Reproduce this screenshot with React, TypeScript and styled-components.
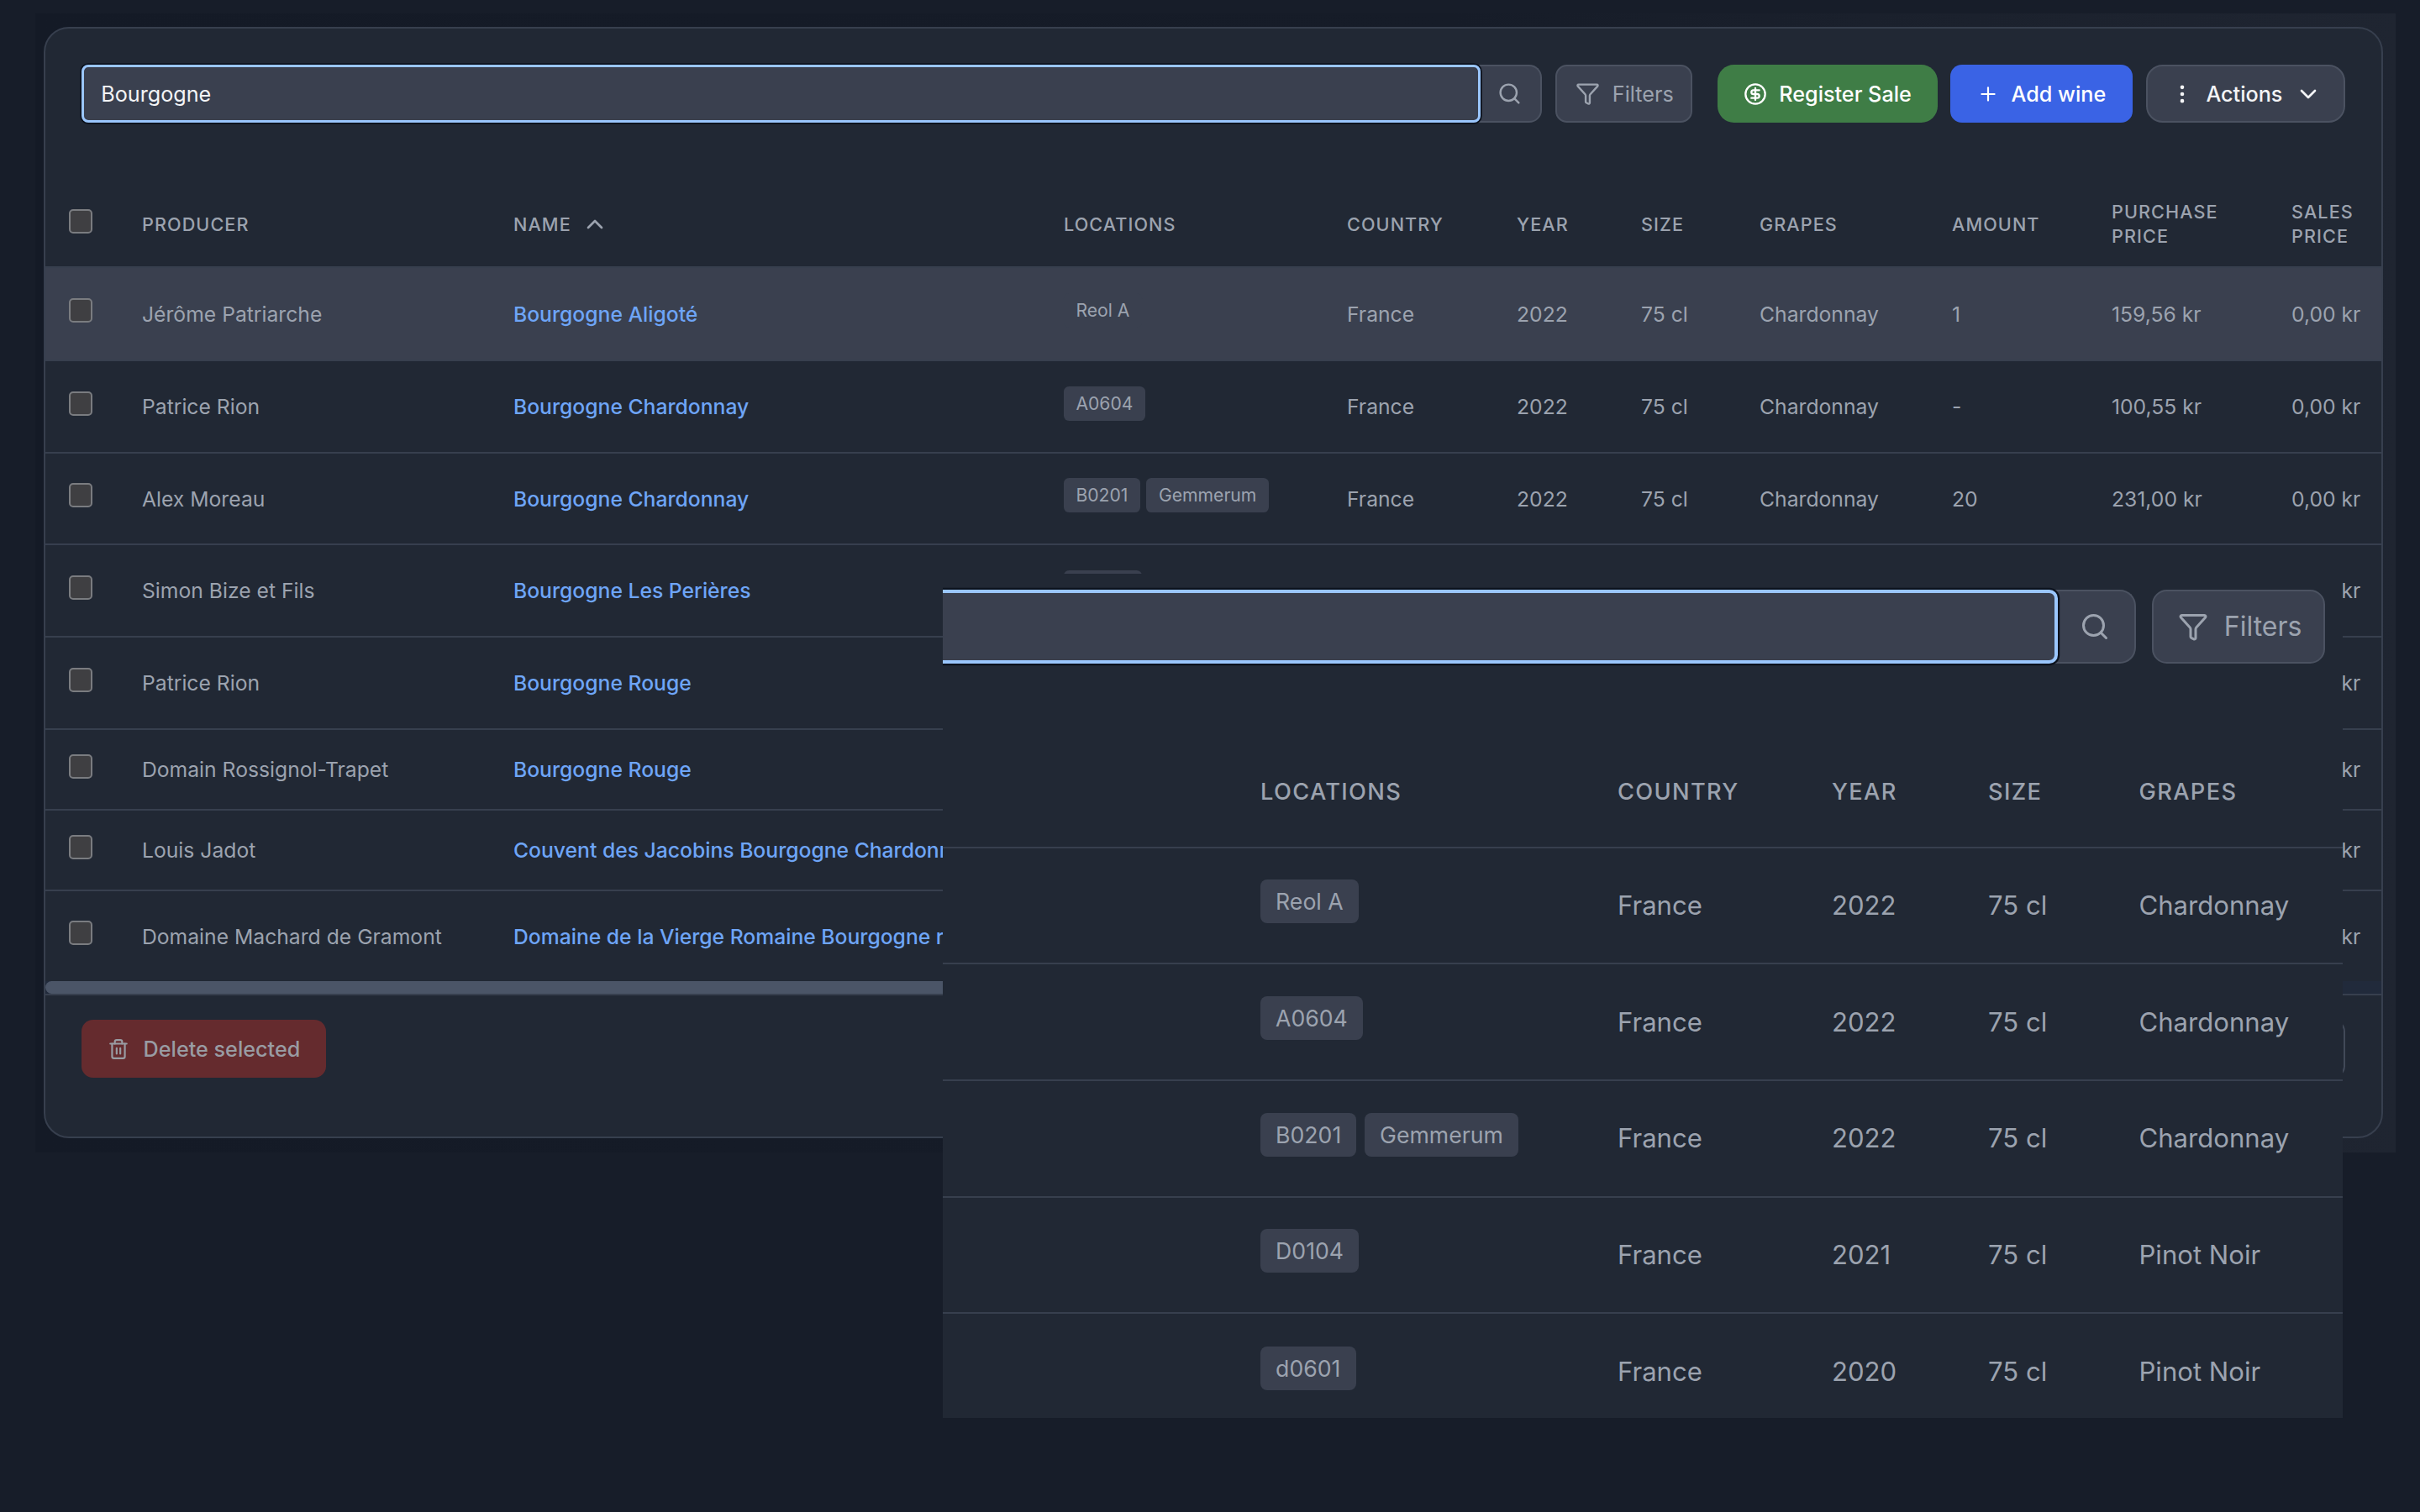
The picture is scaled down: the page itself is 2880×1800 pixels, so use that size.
import React from "react";
import styled, { createGlobalStyle } from "styled-components";
import {
  ChevronDown,
  ChevronUp,
  CircleDollarSign,
  EllipsisVertical,
  Funnel,
  Plus,
  Search,
  Trash2,
} from "lucide-react";

const GlobalStyle = createGlobalStyle`
  html, body { margin: 0; padding: 0; background: #171d29; }
  body { font-family: Inter, "Noto Sans", sans-serif; -webkit-font-smoothing: antialiased; }
  * { box-sizing: border-box; }
`;

const Stage = styled.div`
  position: relative;
  width: 2880px;
  height: 1800px;
  padding: 16px 0 0 42px;
  overflow: hidden;
  background: #171d29;
`;

const Frame = styled.div`
  width: 2809px;
  height: 1356px;
  padding: 16px 15px 17px 10px;
  background: linear-gradient(90deg, #141a26 0%, #161c28 60%, #1f2531 100%);
`;

const Panel = styled.section`
  height: 1323px;
  display: flex;
  flex-direction: column;
  background: #212834;
  border: 2px solid #373f4e;
  border-radius: 30px;
  overflow: hidden;
`;

const Toolbar = styled.div`
  display: flex;
  align-items: center;
  gap: 30px;
  padding: 43px 43px 0 43px;
  font-size: 25.2px;
`;

const ToolGroup = styled.div<{ $grow?: boolean }>`
  display: flex;
  align-items: center;
  gap: 0.6em;
  flex: ${(p) => (p.$grow ? "1" : "none")};
  min-width: 0;
`;

const SearchGroup = styled.div`
  flex: 1;
  display: flex;
  min-width: 0;
`;

const SearchInput = styled.input`
  flex: 1;
  min-width: 0;
  height: 2.74em;
  padding: 0 0.7em 0 0.8em;
  font: 400 1em Inter, sans-serif;
  color: #f3f4f6;
  background: #3a404f;
  border: 0.14em solid #9ac6fd;
  border-radius: 0.32em;
  box-shadow: 0 0 0 0.07em #0c121d;
  outline: none;
  position: relative;
  z-index: 1;
`;

const SearchButton = styled.button`
  flex: none;
  width: 3.05em;
  height: 2.74em;
  margin-left: -0.12em;
  padding: 0 0 0 0.06em;
  font-size: inherit;
  display: flex;
  align-items: center;
  justify-content: center;
  color: #9ca3af;
  background: #3a404f;
  border: 2px solid #4b5261;
  border-left: 0;
  border-radius: 0 0.6em 0.6em 0;
`;

const Button = styled.button<{ $tone: "ghost" | "green" | "blue" | "dark" | "danger" | "outline" }>`
  height: 2.74em;
  display: inline-flex;
  align-items: center;
  flex: none;
  gap: 0.58em;
  padding: 0 1.2em;
  font: 500 1em Inter, sans-serif;
  white-space: nowrap;
  border-radius: 0.55em;
  border: 2px solid transparent;
  ${(p) =>
    p.$tone === "ghost" &&
    `background:#3a404f;border-color:#4b5261;color:#9ca3af;font-weight:400;padding:0 0.8em 0 0.9em;`}
  ${(p) => p.$tone === "green" && `background:#3f7d46;color:#fff;border-radius:0.78em;padding:0 1.14em;`}
  ${(p) => p.$tone === "blue" && `background:#3a63e5;color:#fff;`}
  ${(p) =>
    p.$tone === "dark" &&
    `background:#3a404f;border-color:#4b5261;color:#f3f4f6;border-radius:0.78em;padding:0 1.05em 0 1.1em;gap:0.56em;`}
  ${(p) => p.$tone === "danger" && `background:#652b2e;color:#999ca3;padding:0 1.15em 0 1.15em;gap:0.66em;`}
  ${(p) => p.$tone === "outline" && `background:transparent;border-color:#414958;color:#9ca3af;`}
`;

const TableBlock = styled.div<{ $top: number }>`
  margin-top: ${(p) => p.$top}px;
`;

const Table = styled.table<{ $size: number }>`
  width: 100%;
  table-layout: fixed;
  border-collapse: collapse;
  font-size: ${(p) => p.$size}px;
  color: #9ca3af;
`;

const Col = styled.col<{ $w: number }>`
  width: ${(p) => p.$w}px;
`;

const Row = styled.tr<{ $h: number; $active?: boolean; $last?: boolean }>`
  height: ${(p) => p.$h}px;
  background: ${(p) => (p.$active ? "#3a404f" : "transparent")};
  border-bottom: ${(p) => (p.$last ? "0" : "2px solid #373f4e")};
`;

const Th = styled.th`
  padding: 0;
  font-size: 0.875em;
  line-height: 1.34;
  font-weight: 500;
  letter-spacing: 0.05em;
  text-align: left;
  text-transform: uppercase;
  color: #9ca3af;
  vertical-align: middle;
`;

const SortLabel = styled.span`
  display: inline-flex;
  align-items: center;
  gap: 12px;
`;

const Td = styled.td`
  padding: 0;
  white-space: nowrap;
  vertical-align: middle;
`;

const NameLink = styled.a`
  font-weight: 500;
  color: #6ea5f7;
  text-decoration: none;
`;

const BoxCell = styled.div`
  padding-left: 28px;
  padding-bottom: 8px;
`;

const Checkbox = styled.input.attrs({ type: "checkbox" })`
  appearance: none;
  display: block;
  width: 28px;
  height: 29px;
  margin: 0;
  background: #3f3f42;
  border: 2px solid #7a7c80;
  border-radius: 5px;
`;

const Tags = styled.div`
  display: flex;
  gap: 0.31em;
  padding-bottom: 0.3em;
`;

const Tag = styled.span`
  display: inline-flex;
  align-items: center;
  height: 1.95em;
  padding: 0 0.68em;
  font-size: 0.857em;
  color: #9ca3af;
  background: #3a404f;
  border-radius: 0.3em;
`;

const ScrollTrack = styled.div`
  height: 15px;
  background: #212a3b;
  border-bottom: 2px solid #373f4e;
  box-sizing: content-box;
`;

const ScrollThumb = styled.div`
  width: 2600px;
  height: 15px;
  background: #4b5567;
  border-radius: 8px;
`;

const Footer = styled.footer`
  display: flex;
  justify-content: space-between;
  padding: 29px 43px 0 43px;
  font-size: 25.2px;
`;

const Inset = styled.aside`
  position: absolute;
  left: 1122px;
  top: 683px;
  width: 1666px;
  height: 1005px;
  overflow: hidden;
  background: #212834;
`;

const InsetBar = styled.div`
  display: flex;
  align-items: center;
  gap: 0.6em;
  margin-left: -60px;
  padding: 19px 21px 0 0;
  font-size: 32px;
`;

type Wine = {
  producer: string;
  name: string;
  tags: string[];
  year: string;
  grapes: string;
  amount: string;
  buy: string;
  h: number;
};

const wines: Wine[] = [
  { producer: "Jérôme Patriarche", name: "Bourgogne Aligoté", tags: ["Reol A"], year: "2022", grapes: "Chardonnay", amount: "1", buy: "159,56 kr", h: 111 },
  { producer: "Patrice Rion", name: "Bourgogne Chardonnay", tags: ["A0604"], year: "2022", grapes: "Chardonnay", amount: "-", buy: "100,55 kr", h: 110 },
  { producer: "Alex Moreau", name: "Bourgogne Chardonnay", tags: ["B0201", "Gemmerum"], year: "2022", grapes: "Chardonnay", amount: "20", buy: "231,00 kr", h: 109 },
  { producer: "Simon Bize et Fils", name: "Bourgogne Les Perières", tags: ["D0104"], year: "2021", grapes: "Pinot Noir", amount: "6", buy: "245,00 kr", h: 110 },
  { producer: "Patrice Rion", name: "Bourgogne Rouge", tags: ["d0601"], year: "2020", grapes: "Pinot Noir", amount: "3", buy: "180,00 kr", h: 110 },
  { producer: "Domain Rossignol-Trapet", name: "Bourgogne Rouge", tags: [], year: "2021", grapes: "Pinot Noir", amount: "-", buy: "150,00 kr", h: 96 },
  { producer: "Louis Jadot", name: "Couvent des Jacobins Bourgogne Chardonnay", tags: [], year: "2021", grapes: "Chardonnay", amount: "-", buy: "120,00 kr", h: 96 },
  { producer: "Domaine Machard de Gramont", name: "Domaine de la Vierge Romaine Bourgogne rouge", tags: [], year: "2020", grapes: "Pinot Noir", amount: "-", buy: "140,00 kr", h: 108 },
];

const mainCols = [115, 442, 655, 337, 202, 148, 141, 229, 190, 214, 107];
const insetCols = [378, 425, 255, 186, 179.5, 242.5];
const insetWines = wines.slice(0, 5);

export default function App() {
  return (
    <Stage>
      <GlobalStyle />
      <Frame>
        <Panel>
          <Toolbar>
            <ToolGroup $grow>
              <SearchGroup>
                <SearchInput defaultValue="Bourgogne" aria-label="Search" />
                <SearchButton aria-label="Search">
                  <Search size={29} />
                </SearchButton>
              </SearchGroup>
              <Button $tone="ghost">
                <Funnel size={29} />
                Filters
              </Button>
            </ToolGroup>
            <ToolGroup>
              <Button $tone="green">
                <CircleDollarSign size={28} />
                Register Sale
              </Button>
              <Button $tone="blue">
                <Plus size={26} />
                Add wine
              </Button>
              <Button $tone="dark">
                <EllipsisVertical size={28} />
                Actions
                <ChevronDown size={32} />
              </Button>
            </ToolGroup>
          </Toolbar>

          <TableBlock $top={71}>
            <Table $size={24.7}>
              <colgroup>
                {mainCols.map((w, i) => (
                  <Col key={i} $w={w} />
                ))}
              </colgroup>
              <thead>
                <Row $h={101}>
                  <Th>
                    <BoxCell>
                      <Checkbox aria-label="Select all" />
                    </BoxCell>
                  </Th>
                  <Th>Producer</Th>
                  <Th>
                    <SortLabel>
                      Name
                      <ChevronUp size={32} />
                    </SortLabel>
                  </Th>
                  <Th>Locations</Th>
                  <Th>Country</Th>
                  <Th>Year</Th>
                  <Th>Size</Th>
                  <Th>Grapes</Th>
                  <Th>Amount</Th>
                  <Th>
                    Purchase
                    <br />
                    Price
                  </Th>
                  <Th>
                    Sales
                    <br />
                    Price
                  </Th>
                </Row>
              </thead>
              <tbody>
                {wines.map((w, i) => (
                  <Row key={i} $h={w.h} $active={i === 0} $last={i === wines.length - 1}>
                    <Td>
                      <BoxCell>
                        <Checkbox aria-label={`Select ${w.name}`} />
                      </BoxCell>
                    </Td>
                    <Td>{w.producer}</Td>
                    <Td>
                      <NameLink href="#">{w.name}</NameLink>
                    </Td>
                    <Td>
                      <Tags>
                        {w.tags.map((t) => (
                          <Tag key={t}>{t}</Tag>
                        ))}
                      </Tags>
                    </Td>
                    <Td>France</Td>
                    <Td>{w.year}</Td>
                    <Td>75 cl</Td>
                    <Td>{w.grapes}</Td>
                    <Td>{w.amount}</Td>
                    <Td>{w.buy}</Td>
                    <Td>0,00 kr</Td>
                  </Row>
                ))}
              </tbody>
            </Table>
            <ScrollTrack>
              <ScrollThumb />
            </ScrollTrack>
          </TableBlock>

          <Footer>
            <Button $tone="danger">
              <Trash2 size={26} />
              Delete selected
            </Button>
            <Button $tone="outline">Next</Button>
          </Footer>
        </Panel>
      </Frame>

      <Inset>
        <InsetBar>
          <SearchGroup>
            <SearchInput aria-label="Search magnified" />
            <SearchButton aria-label="Search">
              <Search size={36} />
            </SearchButton>
          </SearchGroup>
          <Button $tone="ghost">
            <Funnel size={36} />
            Filters
          </Button>
        </InsetBar>
        <TableBlock $top={89}>
          <Table $size={31.1}>
            <colgroup>
              {insetCols.map((w, i) => (
                <Col key={i} $w={w} />
              ))}
            </colgroup>
            <thead>
              <Row $h={130}>
                <Th />
                <Th>Locations</Th>
                <Th>Country</Th>
                <Th>Year</Th>
                <Th>Size</Th>
                <Th>Grapes</Th>
              </Row>
            </thead>
            <tbody>
              {insetWines.map((w, i) => (
                <Row key={i} $h={138.7} $last={i === insetWines.length - 1}>
                  <Td />
                  <Td>
                    <Tags>
                      {w.tags.map((t) => (
                        <Tag key={t}>{t}</Tag>
                      ))}
                    </Tags>
                  </Td>
                  <Td>France</Td>
                  <Td>{w.year}</Td>
                  <Td>75 cl</Td>
                  <Td>{w.grapes}</Td>
                </Row>
              ))}
            </tbody>
          </Table>
        </TableBlock>
      </Inset>
    </Stage>
  );
}
